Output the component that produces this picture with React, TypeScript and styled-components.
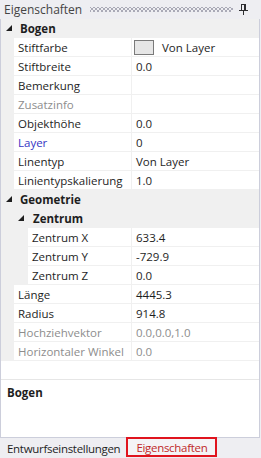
import React from 'react';
import styled, { createGlobalStyle } from 'styled-components';

/*
  Eigenschaften panel: a property grid with collapsible categories,
  a description box under it and the dock tab strip at the bottom.
*/

const GlobalStyle = createGlobalStyle`
  html, body {
    margin: 0;
    padding: 0;
    background: #eeeef2;
  }
  body {
    font-family: 'Segoe UI', 'Open Sans', 'Noto Sans', sans-serif;
    font-size: 11.5px;
    color: #1e1e1e;
  }
`;

type Tone = 'normal' | 'disabled' | 'link';

type GridRow =
  | { kind: 'cat'; label: string; level: number }
  | { kind: 'prop'; label: string; value: string; level: number; tone?: Tone; swatch?: boolean };

const rows: GridRow[] = [
  { kind: 'cat', label: 'Bogen', level: 0 },
  { kind: 'prop', label: 'Stiftfarbe', value: 'Von Layer', level: 0, swatch: true },
  { kind: 'prop', label: 'Stiftbreite', value: '0.0', level: 0 },
  { kind: 'prop', label: 'Bemerkung', value: '', level: 0 },
  { kind: 'prop', label: 'Zusatzinfo', value: '', level: 0, tone: 'disabled' },
  { kind: 'prop', label: 'Objekthöhe', value: '0.0', level: 0 },
  { kind: 'prop', label: 'Layer', value: '0', level: 0, tone: 'link' },
  { kind: 'prop', label: 'Linentyp', value: 'Von Layer', level: 0 },
  { kind: 'prop', label: 'Linientypskalierung', value: '1.0', level: 0 },
  { kind: 'cat', label: 'Geometrie', level: 0 },
  { kind: 'cat', label: 'Zentrum', level: 1 },
  { kind: 'prop', label: 'Zentrum X', value: '633.4', level: 1 },
  { kind: 'prop', label: 'Zentrum Y', value: '-729.9', level: 1 },
  { kind: 'prop', label: 'Zentrum Z', value: '0.0', level: 1 },
  { kind: 'prop', label: 'Länge', value: '4445.3', level: 0 },
  { kind: 'prop', label: 'Radius', value: '914.8', level: 0 },
  { kind: 'prop', label: 'Hochziehvektor', value: '0.0,0.0,1.0', level: 0, tone: 'disabled' },
  { kind: 'prop', label: 'Horizontaler Winkel', value: '0.0', level: 0, tone: 'disabled' },
];

const toneColor: Record<Tone, string> = {
  normal: '#1e1e1e',
  disabled: '#8d8d8d',
  link: '#3434c4',
};

const Panel = styled.div`
  width: 260px;
  height: 458px;
  display: flex;
  flex-direction: column;
`;

const TitleBar = styled.div`
  height: 19px;
  display: flex;
  align-items: center;
  padding: 0 12px 0 4px;
  background: #eeeef2;
  color: #444;
  font-size: 12px;
`;

const Title = styled.span`
  line-height: 19px;
`;

const Grip = styled.div`
  flex: 1;
  height: 5px;
  margin: 0 6px 0 8px;
  background-image:
    radial-gradient(circle, #a8a8b4 0.7px, transparent 0.9px),
    radial-gradient(circle, #a8a8b4 0.7px, transparent 0.9px);
  background-size: 4px 4px;
  background-position: 0 0, 2px 2px;
`;

const Body = styled.div`
  flex: 1;
  display: flex;
  flex-direction: column;
  background: #fff;
  border: 1px solid #cccedb;
  border-top: none;
`;

const Grid = styled.div`
  display: flex;
  flex-direction: column;
`;

const CatRow = styled.div<{ $level: number }>`
  height: 18px;
  border-bottom: 1px solid #f0f0f0;
  background: #f0f0f0;
  display: flex;
  align-items: center;
  padding-left: ${p => 5 + p.$level * 12}px;
  gap: ${p => 8 + p.$level}px;
  font-weight: 700;
`;

const PropRow = styled.div`
  height: 18px;
  border-bottom: 1px solid #f0f0f0;
  display: grid;
  grid-template-columns: 131px 1fr;
`;

const NameCell = styled.div<{ $level: number; $tone: Tone }>`
  display: flex;
  align-items: center;
  border-right: 1px solid #f0f0f0;
  color: ${p => toneColor[p.$tone]};
  white-space: nowrap;
  overflow: hidden;

  &::before {
    content: '';
    align-self: stretch;
    flex: none;
    width: ${p => 13 + p.$level * 14}px;
    margin-right: 4px;
    background: #f0f0f0;
  }
`;

const ValueCell = styled.div<{ $tone: Tone }>`
  display: flex;
  align-items: center;
  gap: 8px;
  padding-left: 4px;
  color: ${p => (p.$tone === 'disabled' ? toneColor.disabled : toneColor.normal)};
  white-space: nowrap;
  overflow: hidden;
`;

const Swatch = styled.span`
  width: 18px;
  height: 13px;
  margin-left: -2px;
  border: 1px solid #7a7a7a;
  background: #e6e6e6;
`;

const Filler = styled.div`
  flex: 1;
`;

const Description = styled.div`
  height: 58px;
  border-top: 1px solid #e6e6e6;
  padding: 5px 6px;
  box-sizing: border-box;
  font-weight: 700;
`;

const TabStrip = styled.div`
  height: 20px;
  display: flex;
  align-items: stretch;
  padding-left: 1px;
  background: #eeeef2;
  letter-spacing: -0.3px;
`;

const Tab = styled.div<{ $active?: boolean }>`
  display: flex;
  align-items: center;
  padding: 0 ${p => (p.$active ? 8 : 6)}px;
  color: ${p => (p.$active ? '#c02a2a' : '#1e1e1e')};
  background: ${p => (p.$active ? '#f4f4f6' : 'transparent')};
  border: ${p => (p.$active ? '2px solid #e0141e' : 'none')};
  margin: ${p => (p.$active ? '-1px 0 1px' : '0')};
`;

function Triangle() {
  return (
    <svg width="6" height="6" viewBox="0 0 6 6">
      <polygon points="6,0 6,6 0,6" fill="#1e1e1e" />
    </svg>
  );
}

function PinIcon() {
  return (
    <svg width="9" height="11" viewBox="0 0 9 11">
      <g fill="#2d2d30">
        <rect x="2" y="0" width="5" height="1" />
        <rect x="2" y="1" width="1" height="5" />
        <rect x="5" y="1" width="2" height="5" />
        <rect x="0" y="6" width="9" height="1" />
        <rect x="4" y="7" width="1" height="4" />
      </g>
    </svg>
  );
}

export default function App() {
  return (
    <>
      <GlobalStyle />
      <Panel>
        <TitleBar>
          <Title>Eigenschaften</Title>
          <Grip />
          <PinIcon />
        </TitleBar>
        <Body>
          <Grid>
            {rows.map(row =>
              row.kind === 'cat' ? (
                <CatRow key={row.label} $level={row.level}>
                  <Triangle />
                  <span>{row.label}</span>
                </CatRow>
              ) : (
                <PropRow key={row.label}>
                  <NameCell $level={row.level} $tone={row.tone ?? 'normal'}>
                    {row.label}
                  </NameCell>
                  <ValueCell $tone={row.tone ?? 'normal'}>
                    {row.swatch && <Swatch />}
                    {row.value}
                  </ValueCell>
                </PropRow>
              )
            )}
          </Grid>
          <Filler />
          <Description>Bogen</Description>
        </Body>
        <TabStrip>
          <Tab>Entwurfseinstellungen</Tab>
          <Tab $active>Eigenschaften</Tab>
        </TabStrip>
      </Panel>
    </>
  );
}
